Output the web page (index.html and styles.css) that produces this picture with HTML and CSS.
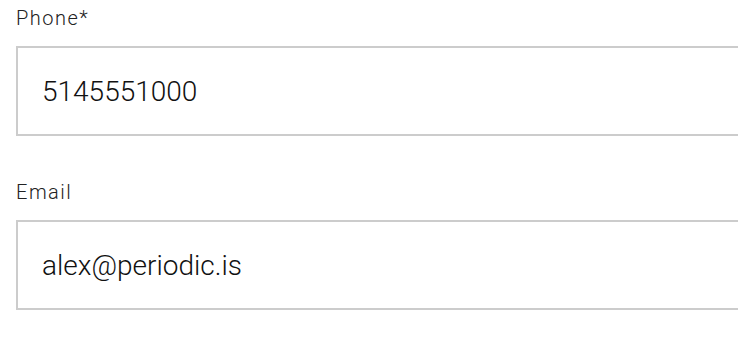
FILE: index.html
```html
<!DOCTYPE html>
<html lang="en">
<head>
    <meta charset="UTF-8">
    <meta name="viewport" content="width=device-width, initial-scale=1.0">
    <title>Contact</title>
    <link rel="stylesheet" href="styles.css">
</head>
<body>
    <form class="contact-form">
        <div class="field">
            <label class="field-label" for="phone">Phone*</label>
            <input class="field-input" type="tel" id="phone" value="5145551000">
        </div>
        <div class="field">
            <label class="field-label" for="email">Email</label>
            <input class="field-input" type="email" id="email" value="alex@periodic.is">
        </div>
    </form>
</body>
</html>
```

FILE: styles.css
```css
* {
    box-sizing: border-box;
    margin: 0;
    padding: 0;
}

body {
    font-family: Roboto, 'Liberation Sans', sans-serif;
    background: #fff;
    color: #1a1a1a;
}

.contact-form {
    padding: 6px 0 0 16px;
    overflow: hidden;
}

.field {
    margin-bottom: 44px;
}

.field-label {
    display: block;
    font-size: 20px;
    font-weight: 300;
    letter-spacing: 1.5px;
    line-height: 24px;
    color: #222;
    margin-bottom: 16px;
}

.field-input {
    display: block;
    width: calc(100% + 40px);
    height: 90px;
    border: 2px solid #ccc;
    padding: 0 24px;
    font-family: Roboto, 'Liberation Sans', sans-serif;
    font-size: 28px;
    font-weight: 300;
    color: #111;
    background: #fff;
    outline: none;
}
```
